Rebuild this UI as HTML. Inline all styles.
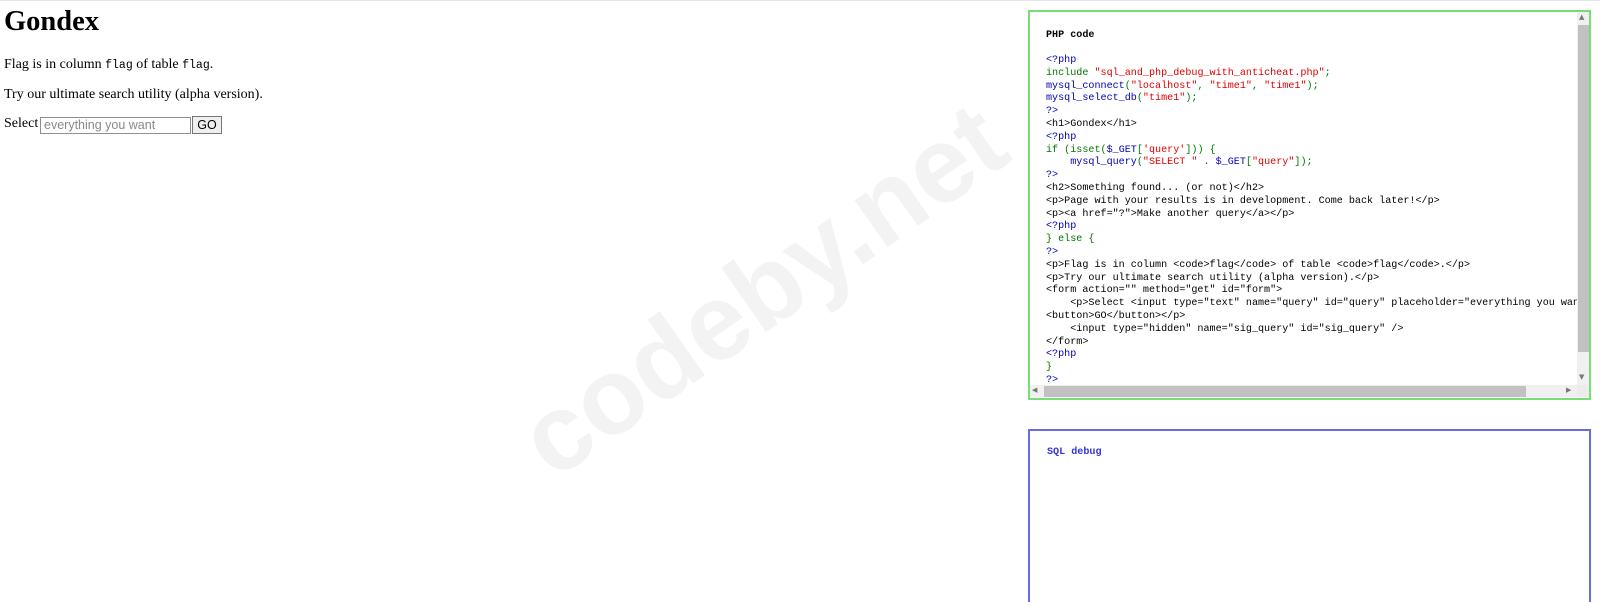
<!DOCTYPE html>
<html><head><meta charset="utf-8"><style>
html,body{margin:0;padding:0;background:#fff;width:1600px;height:602px;overflow:hidden;position:relative}
.topline{position:absolute;left:0;top:0;width:1600px;height:1px;background:#e6e6e6}
.left{position:absolute;left:4px;top:0;font-family:"Liberation Serif",serif;font-size:14px;color:#000}
h1{position:absolute;left:0;top:6px;margin:0;font-size:28.5px;font-weight:bold;white-space:nowrap}
.p{position:absolute;left:0;white-space:nowrap}
code{font-family:"Liberation Mono",monospace;font-size:11.5px}
.inp{position:absolute;left:36px;top:117px;height:15px;border:1px solid #8f8f8f;font-family:"Liberation Sans",sans-serif;font-size:12.5px;color:#8a8a8a;line-height:15px;padding-left:3px;width:146px}
.btn{position:absolute;left:188px;top:116px;width:28px;height:16px;border:1px solid #767676;background:#efefef;font-family:"Liberation Sans",sans-serif;font-size:12.5px;text-align:center;line-height:16px}
.wm{position:absolute;left:560px;top:392px;line-height:100px;height:100px;font-family:"Liberation Sans",sans-serif;font-weight:bold;font-size:108px;color:#f3f3f3;transform:rotate(-35deg);transform-origin:0 98px;white-space:nowrap}
.box1{position:absolute;left:1028px;top:10px;width:563px;height:390px;border:2px solid #77dd77;box-sizing:border-box;overflow:hidden;background:#fff}
.code{position:absolute;left:16px;top:17px;font-family:"Liberation Mono",monospace;font-size:10.1px;line-height:12.8px;white-space:pre;color:#000}
.b{color:#0000bb}.g{color:#007700}.r{color:#dd0000}
.vs{position:absolute;left:1577px;top:12px;width:12px;height:373px;background:#f0f0f0}
.vt{position:absolute;left:1578px;top:25px;width:11px;height:327px;background:#c1c1c1}
.hs{position:absolute;left:1030px;top:385px;width:547px;height:12px;background:#f0f0f0}
.ht{position:absolute;left:1044px;top:386px;width:482px;height:11px;background:#c1c1c1}
.corner{position:absolute;left:1577px;top:385px;width:12px;height:12px;background:#ececec}
.box2{position:absolute;left:1028px;top:429px;width:563px;height:200px;border:2px solid #6b6be0;box-sizing:border-box}
.sq{position:absolute;left:1047px;top:447px;font-family:"Liberation Mono",monospace;font-size:10.1px;font-weight:bold;color:#3333dd}
.arr{position:absolute;font-size:7px;color:#777;font-family:"DejaVu Sans",sans-serif}
</style></head><body>
<div class="topline"></div>
<div class="wm">codeby.net</div>
<div class="left">
<h1>Gondex</h1>
<div class="p" style="top:57px">Flag is in column <code>flag</code> of table <code>flag</code>.</div>
<div class="p" style="top:87px">Try our ultimate search utility (alpha version).</div>
<div class="p" style="top:116px">Select</div>
<div class="inp">everything you want</div>
<div class="btn">GO</div>
</div>
<div class="box1">
<div style="position:absolute;left:16px;top:18px;font-family:'Liberation Mono',monospace;font-size:10.1px;font-weight:bold">PHP code</div>
<div class="code" style="top:43px"><span class="b">&lt;?php</span>
<span class="g">include </span><span class="r">"sql_and_php_debug_with_anticheat.php"</span><span class="g">;</span>
<span class="b">mysql_connect</span><span class="g">(</span><span class="r">"localhost"</span><span class="g">, </span><span class="r">"time1"</span><span class="g">, </span><span class="r">"time1"</span><span class="g">);</span>
<span class="b">mysql_select_db</span><span class="g">(</span><span class="r">"time1"</span><span class="g">);</span>
<span class="b">?&gt;</span>
&lt;h1&gt;Gondex&lt;/h1&gt;
<span class="b">&lt;?php</span>
<span class="g">if (isset(</span><span class="b">$_GET</span><span class="g">[</span><span class="r">'query'</span><span class="g">])) {</span>
<span class="b">    mysql_query</span><span class="g">(</span><span class="r">"SELECT " </span><span class="g">. </span><span class="b">$_GET</span><span class="g">[</span><span class="r">"query"</span><span class="g">]);</span>
<span class="b">?&gt;</span>
&lt;h2&gt;Something found... (or not)&lt;/h2&gt;
&lt;p&gt;Page with your results is in development. Come back later!&lt;/p&gt;
&lt;p&gt;&lt;a href="?"&gt;Make another query&lt;/a&gt;&lt;/p&gt;
<span class="b">&lt;?php</span>
<span class="g">} else {</span>
<span class="b">?&gt;</span>
&lt;p&gt;Flag is in column &lt;code&gt;flag&lt;/code&gt; of table &lt;code&gt;flag&lt;/code&gt;.&lt;/p&gt;
&lt;p&gt;Try our ultimate search utility (alpha version).&lt;/p&gt;
&lt;form action="" method="get" id="form"&gt;
    &lt;p&gt;Select &lt;input type="text" name="query" id="query" placeholder="everything you want" /&gt;
&lt;button&gt;GO&lt;/button&gt;&lt;/p&gt;
    &lt;input type="hidden" name="sig_query" id="sig_query" /&gt;
&lt;/form&gt;
<span class="b">&lt;?php</span>
<span class="g">}</span>
<span class="b">?&gt;</span></div>
</div>
<div class="vs"></div><div class="vt"></div>
<div class="hs"></div><div class="ht"></div><div class="corner"></div>
<div class="arr" style="left:1579px;top:13px">▲</div>
<div class="arr" style="left:1579px;top:373px">▼</div>
<div class="arr" style="left:1032px;top:386px">◀</div>
<div class="arr" style="left:1566px;top:386px">▶</div>
<div class="box2"></div>
<div class="sq">SQL debug</div>
</body></html>
